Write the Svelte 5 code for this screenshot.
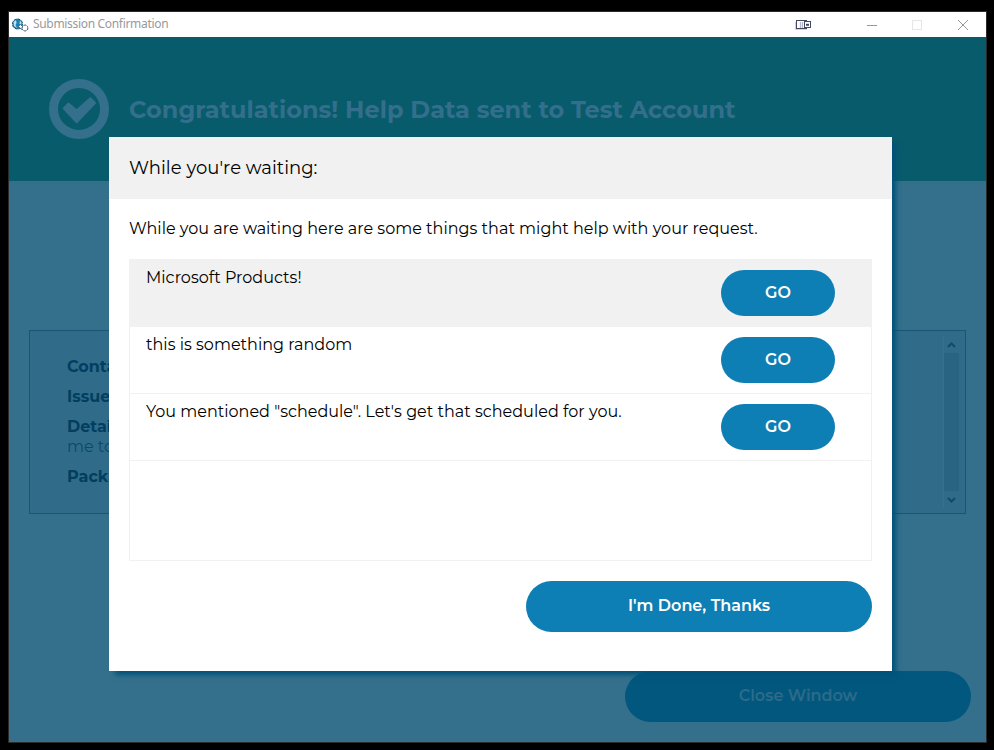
<script>
  const suggestions = [
    'Microsoft Products!',
    'this is something random',
    'You mentioned "schedule". Let\'s get that scheduled for you.'
  ];
</script>

<div class="desktop">
  <div class="window">
    <header class="titlebar">
      <svg class="app-icon" width="17" height="14" viewBox="0 0 17 14">
        <circle cx="5.500" cy="6" r="5" fill="#1b83b4" stroke="#0d5275" stroke-dasharray="3 .8" />
        <path d="M1.500 4l2.500-2 .5 3-1 2 1.500 3-3-2zM8 2.500l1.500 2-.5 3-1.500-2z" fill="#c4e1ee" />
        <path d="M6 8.500l2.500-2 2.500 2.500-1 2.500z" fill="#fff" stroke="#244d62" stroke-width=".8" />
        <circle cx="13" cy="10" r="2.900" fill="#fff" stroke="#244d62" stroke-dasharray="2.400 .6" />
      </svg>
      <span class="caption">Submission Confirmation</span>
      <svg class="monitor" width="17" height="12" viewBox="0 0 17 12">
        <path d="M0 10.500h12M.5 3v8" stroke="#d4d2da" />
        <rect x="1.500" y="1.500" width="10" height="8" fill="#fff" stroke="#444861" />
        <path d="M5.500 3v6M7.500 3v6" stroke="#b8bac3" stroke-width="1.300" />
        <rect x="9.500" y="2.500" width="6" height="6" fill="#fff" stroke="#444861" />
        <path d="M11 5.800h3" stroke="#444861" stroke-width="2" />
      </svg>
      <svg class="controls" width="102" height="12" viewBox="0 0 102 12">
        <path d="M0 6.500h10" stroke="#999" />
        <rect x="45.500" y="1.500" width="9" height="9" fill="none" stroke="#e6e6e6" />
        <path d="M91 1l10 10M101 1l-10 10" stroke="#999" />
      </svg>
    </header>

    <div class="banner">
      <svg width="60" height="60" viewBox="0 0 60 60">
        <circle cx="30" cy="30" r="25.500" fill="none" stroke="#346f8c" stroke-width="9" />
        <path d="M15 29.500L19.500 25L27.700 31.700L41.500 19.500L45.800 24L27.700 43z" fill="#346f8c" stroke="#346f8c" stroke-width="2.500" stroke-linejoin="round" />
      </svg>
      <h1>Congratulations! Help Data sent to Test Account</h1>
    </div>

    <main>
      <section class="summary">
        <div class="fields">
          <p><b>Contact:</b></p>
          <p><b>Issue:</b></p>
          <p><b>Details:</b><br />me to</p>
          <p><b>Package:</b></p>
        </div>
        <div class="scrollbar">
          <svg width="9" height="6" viewBox="0 0 9 6"><path d="M1 5l3.500-3.500L8 5" /></svg>
          <div class="thumb"></div>
          <svg width="9" height="6" viewBox="0 0 9 6"><path d="M1 1l3.500 3.500L8 1" /></svg>
        </div>
      </section>
      <button class="close">Close Window</button>
    </main>
  </div>

  <div class="modal">
    <h2>While you're waiting:</h2>
    <div class="content">
      <p class="intro">While you are waiting here are some things that might help with your request.</p>
      <ul>
        {#each suggestions as text, i}
          <li class:active={i === 0}>
            <span>{text}</span>
            <button class="go">GO</button>
          </li>
        {/each}
      </ul>
      <button class="done">I'm Done, Thanks</button>
    </div>
  </div>
</div>

<style>
  :global(body) { margin: 0; background: #000; }
  * { box-sizing: border-box; }
  h1, h2, p, ul { margin: 0; padding: 0; }
  button { border: 0; padding: 0; font: 600 16px/20px Montserrat, Inter, sans-serif; }
  .desktop {
    position: relative;
    width: 994px;
    height: 750px;
    padding: 11px 7px 7px 8px;
    background: #000;
    overflow: hidden;
    font: 16px/20px Montserrat, Inter, sans-serif;
    white-space: nowrap;
  }
  .window { width: 979px; height: 732px; border: 1px solid #2b2b2b; display: flex; flex-direction: column; }
  .titlebar { height: 25px; flex: none; background: #fff; display: flex; align-items: center; padding: 0 17px 0 3px; }
  .caption { margin-left: 4px; padding-bottom: 1px; font: 12px/16px "Noto Sans", "Open Sans", sans-serif; letter-spacing: -.32px; color: #999; }
  .monitor { margin-left: auto; margin-right: 55px; }
  .banner { height: 144px; flex: none; background: #085b6a; display: flex; align-items: center; padding: 0 40px; gap: 20px; }
  h1 { padding-top: 2px; font-size: 24px; line-height: 30px; font-weight: 700; color: #336f8c; letter-spacing: .02px; }
  main { flex: 1; background: #34708c; padding: 149px 15px 20px 20px; display: flex; flex-direction: column; justify-content: space-between; }
  .summary { width: 937px; height: 184px; border: 1px solid #175674; background: #306c89; display: flex; justify-content: space-between; padding: 5px 6px 5px 37px; color: #0a4a6a; }
  .fields { padding-top: 21px; }
  .fields p { margin-bottom: 10px; }
  .fields b { color: #023e60; font-weight: 700; }
  .scrollbar { width: 16px; border-left: 1px solid #36718d; display: flex; flex-direction: column; align-items: center; justify-content: space-between; padding: 6px 0 5px; }
  .scrollbar path { fill: none; stroke: #0c4d6c; stroke-width: 2; }
  .thumb { width: 15px; height: 138px; margin-bottom: 1px; background: #296582; }
  .close { align-self: flex-end; width: 346px; height: 51px; border-radius: 26px; background: #02577f; color: #2c6b89; padding-bottom: 1px; }
  .modal {
    position: absolute;
    left: 109px;
    top: 137px;
    width: 783px;
    height: 534px;
    background: #fff;
    box-shadow: 5px 5px 5px -1px #02527a;
    color: #000;
  }
  h2 { height: 62px; padding: 16px 20px; background: #f1f1f1; font-size: 18px; line-height: 30px; font-weight: 400; letter-spacing: .05px; }
  .content { padding: 20px; display: flex; flex-direction: column; }
  .intro { height: 40px; letter-spacing: .015px; }
  ul { list-style: none; height: 302px; border: 1px solid #f1f1f1; }
  li { height: 67px; border-bottom: 1px solid #f1f1f1; display: flex; justify-content: space-between; align-items: flex-start; padding: 8px 36px 0 16px; letter-spacing: .015px; }
  li.active { background: #f1f1f1; }
  .go { margin-top: 2px; width: 114px; height: 46px; border-radius: 23px; background: #0e7fb4; color: #fff; }
  .done { align-self: flex-end; margin-top: 20px; width: 346px; height: 51px; border-radius: 26px; background: #0e7fb4; color: #fff; padding-bottom: 1px; }
</style>
